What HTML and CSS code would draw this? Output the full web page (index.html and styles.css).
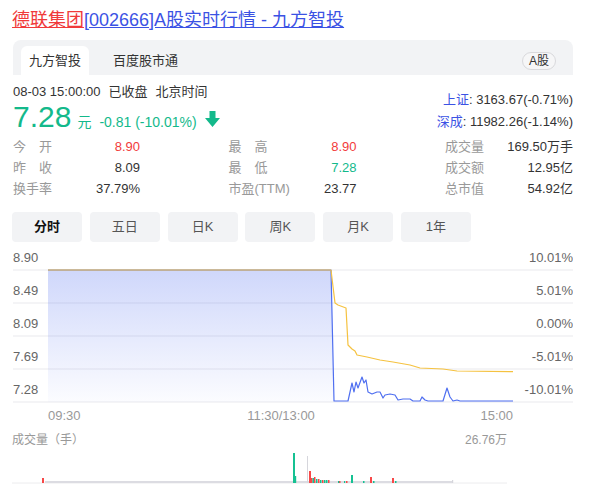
FILE: index.html
```html
<!DOCTYPE html>
<html lang="zh-CN">
<head>
<meta charset="utf-8">
<title>德联集团[002666]A股实时行情 - 九方智投</title>
<link rel="stylesheet" href="styles.css">
</head>
<body>
<div class="page">
  <h1 class="title"><a class="name" href="#">德联集团</a><a class="rest" href="#">[002666]A股实时行情 - 九方智投</a></h1>

  <div class="tabs">
    <div class="tab active">九方智投</div>
    <div class="tab">百度股市通</div>
    <span class="pill">A股</span>
  </div>

  <div class="quote">
    <div class="quote-left">
      <div class="time"><span>08-03 15:00:00</span><span>已收盘</span><span>北京时间</span></div>
      <div class="price-row">
        <span class="price">7.28</span>
        <span class="unit">元</span>
        <span class="chg">-0.81 (-10.01%)</span>
        <svg class="arrow" width="15" height="16" viewBox="0 0 15 16"><path d="M4.5 0H10.5V7H15L7.5 16L0 7H4.5Z" fill="#13b98b"/></svg>
      </div>
    </div>
    <div class="indices">
      <div><span class="idx">上证</span>: 3163.67(-0.71%)</div>
      <div><span class="idx">深成</span>: 11982.26(-1.14%)</div>
    </div>
  </div>

  <div class="stats">
    <div class="stat"><span class="lbl">今&#12288;开</span><span class="val up">8.90</span></div>
    <div class="stat"><span class="lbl">最&#12288;高</span><span class="val up">8.90</span></div>
    <div class="stat"><span class="lbl">成交量</span><span class="val">169.50万手</span></div>
    <div class="stat"><span class="lbl">昨&#12288;收</span><span class="val">8.09</span></div>
    <div class="stat"><span class="lbl">最&#12288;低</span><span class="val down">7.28</span></div>
    <div class="stat"><span class="lbl">成交额</span><span class="val">12.95亿</span></div>
    <div class="stat"><span class="lbl">换手率</span><span class="val">37.79%</span></div>
    <div class="stat"><span class="lbl">市盈(TTM)</span><span class="val">23.77</span></div>
    <div class="stat"><span class="lbl">总市值</span><span class="val">54.92亿</span></div>
  </div>

  <div class="periods">
    <div class="period active">分时</div>
    <div class="period">五日</div>
    <div class="period">日K</div>
    <div class="period">周K</div>
    <div class="period">月K</div>
    <div class="period">1年</div>
  </div>

  <svg class="chart" width="561" height="176" viewBox="12 248 561 176">
    <defs>
      <linearGradient id="area" x1="0" y1="270" x2="0" y2="402" gradientUnits="userSpaceOnUse">
        <stop offset="0" stop-color="#4e6cf0" stop-opacity="0.27"/>
        <stop offset="1" stop-color="#4e6cf0" stop-opacity="0.02"/>
      </linearGradient>
    </defs>
    <g stroke="#f1f1f3" stroke-width="1.5">
      <line x1="13" y1="270" x2="573" y2="270"/>
      <line x1="13" y1="303" x2="573" y2="303"/>
      <line x1="13" y1="336" x2="573" y2="336"/>
      <line x1="13" y1="369" x2="573" y2="369"/>
      <line x1="13" y1="402" x2="573" y2="402"/>
    </g>
    <g class="axis">
      <text x="13" y="262">8.90</text>
      <text x="13" y="295">8.49</text>
      <text x="13" y="328">8.09</text>
      <text x="13" y="361">7.69</text>
      <text x="13" y="394">7.28</text>
    </g>
    <g class="axis" text-anchor="end">
      <text x="573" y="262">10.01%</text>
      <text x="573" y="295">5.01%</text>
      <text x="573" y="328">0.00%</text>
      <text x="573" y="361">-5.01%</text>
      <text x="573" y="394">-10.01%</text>
    </g>
    <g class="taxis">
      <text x="48" y="420">09:30</text>
      <text x="281" y="420" text-anchor="middle">11:30/13:00</text>
      <text x="513" y="420" text-anchor="end">15:00</text>
    </g>
    <path fill="url(#area)" d="M48 270L331 270L334 401L513 401L513 402L48 402Z"/>
    <polyline fill="none" stroke="#4f6ff0" stroke-width="1.2" stroke-linejoin="round" points="48,270 331,270 334,401 348,401 352,383 354,392 356,382 358,388 362,377 364,383 366,380 368,392 372,394 377,392 380,392 383,398 385,395 390,394 395,395 398,400 403,399 410,399 413,401 420,401 422,397 425,400 428,401 443,401 447,388 450,397 453,401 457,400 460,401 513,401"/>
    <polyline fill="none" stroke="#f5c240" stroke-width="1.2" stroke-linejoin="round" points="48,270 331,270 335,303 338,305 346,308 348,345 352,349 355,351 357,355 367,357 380,360 393,362 410,365 420,368 443,369 457,371 513,371.7"/>
  </svg>

  <div class="vol-head"><span>成交量（手）</span><span>26.76万</span></div>
  <svg class="vol" width="495" height="39" viewBox="12 450 495 39">
    <line x1="12" y1="483" x2="507" y2="483" stroke="#ececee" stroke-width="1"/>
    <rect x="45" y="481" width="407" height="2" fill="#dcdce2"/>
    <g fill="#f74848">
      <rect x="42" y="478" width="2" height="5"/>
      <rect x="309" y="471" width="2" height="12"/>
      <rect x="311" y="478" width="1.5" height="5"/>
      <rect x="314" y="477" width="1.5" height="6"/>
      <rect x="318" y="479" width="1.5" height="4"/>
      <rect x="322" y="480" width="1.5" height="3"/>
      <rect x="328" y="480" width="1.5" height="3"/>
      <rect x="339" y="481" width="1.5" height="2"/>
      <rect x="346" y="481" width="1.5" height="2"/>
      <rect x="370" y="477" width="2" height="6"/>
      <rect x="392" y="478" width="2" height="5"/>
    </g>
    <g fill="#15c192">
      <rect x="293" y="453" width="2" height="30"/>
      <rect x="295" y="476" width="1.2" height="7"/>
      <rect x="312.5" y="478" width="1.5" height="5"/>
      <rect x="316" y="479" width="1.5" height="4"/>
      <rect x="320" y="480" width="1.5" height="3"/>
      <rect x="324" y="480" width="1.5" height="3"/>
      <rect x="326" y="480" width="1.5" height="3"/>
      <rect x="338" y="481" width="1.2" height="2"/>
      <rect x="344" y="481" width="1.2" height="2"/>
      <rect x="351" y="475" width="2" height="8"/>
      <rect x="363" y="481" width="1.5" height="2"/>
      <rect x="373" y="481" width="1.5" height="2"/>
      <rect x="395" y="481" width="1.5" height="2"/>
    </g>
    <g fill="#d6d6dc">
      <rect x="307" y="456" width="1" height="27"/>
      <rect x="452" y="480" width="1.2" height="3"/>
    </g>
  </svg>
</div>
</body>
</html>
```

FILE: styles.css
```css
* { box-sizing: border-box; }

body {
  margin: 0;
  background: #fff;
  color: #333;
  font-family: "Liberation Sans", "Noto Sans CJK SC", sans-serif;
}

.page {
  width: 591px;
  padding: 8px 18px 0 12px;
}

.title {
  margin: 0;
  font-size: 18px;
  line-height: 24px;
  font-weight: normal;
  white-space: nowrap;
}

.title a { text-decoration: underline; }
.title .name { color: #f03a3a; }
.title .rest { color: #3b52e4; }

.tabs {
  margin: 8px 0 0 1px;
  height: 35px;
  background: #f2f3f5;
  border-radius: 8px 8px 0 0;
  display: flex;
  align-items: flex-end;
  padding: 0 17px 0 8px;
}

.tab {
  height: 29px;
  line-height: 29px;
  padding: 0 8px;
  font-size: 13px;
  color: #333;
}

.tab.active {
  background: #fff;
  border-radius: 6px 6px 0 0;
}

.tab + .tab { margin-left: 16px; }

.pill {
  margin-left: auto;
  align-self: flex-start;
  margin-top: 12px;
  height: 18px;
  line-height: 16px;
  padding: 0 6px;
  border: 1px solid #d9d9dc;
  border-radius: 9px;
  font-size: 12px;
  color: #333;
  background: #f6f6f7;
}

.quote {
  margin: 8px 0 0 1px;
  display: flex;
  justify-content: space-between;
  align-items: flex-end;
}

.time {
  font-size: 13px;
  line-height: 18px;
  color: #333;
  display: flex;
  gap: 8px;
}

.price-row {
  display: flex;
  align-items: baseline;
  height: 32px;
  color: #13b98b;
}

.price {
  font-size: 30px;
  line-height: 32px;
}

.unit {
  font-size: 14px;
  margin-left: 6px;
}

.chg {
  font-size: 14px;
  margin-left: 8px;
}

.arrow {
  margin-left: 8px;
  margin-bottom: -3px;
}

.indices {
  font-size: 13px;
  line-height: 22px;
  text-align: right;
  color: #333;
}

.idx { color: #3b52e4; }

.stats {
  margin: 3px 0 0 1px;
  display: grid;
  grid-template-columns: 127px 128px 128px;
  justify-content: space-between;
  font-size: 13px;
  line-height: 21px;
}

.stat {
  display: flex;
  justify-content: space-between;
}

.lbl { color: #999; }
.val { color: #333; }
.val.up { color: #f23b3b; }
.val.down { color: #13b98b; }

.periods {
  margin-top: 13px;
  display: flex;
  gap: 7.8px;
}

.period {
  width: 70px;
  height: 30px;
  line-height: 30px;
  text-align: center;
  background: #f2f3f5;
  border-radius: 4px;
  font-size: 13px;
  color: #555;
}

.period.active {
  color: #111;
  font-weight: bold;
}

.chart {
  display: block;
  margin-top: 6px;
}

.axis {
  font-family: "Liberation Sans", sans-serif;
  font-size: 13px;
  fill: #666;
}

.taxis {
  font-family: "Liberation Sans", sans-serif;
  font-size: 13px;
  fill: #999;
}

.vol-head {
  width: 495px;
  margin-top: 8px;
  display: flex;
  justify-content: space-between;
  font-size: 12px;
  line-height: 16px;
  color: #999;
}

.vol {
  display: block;
  margin-top: 2px;
}
```
